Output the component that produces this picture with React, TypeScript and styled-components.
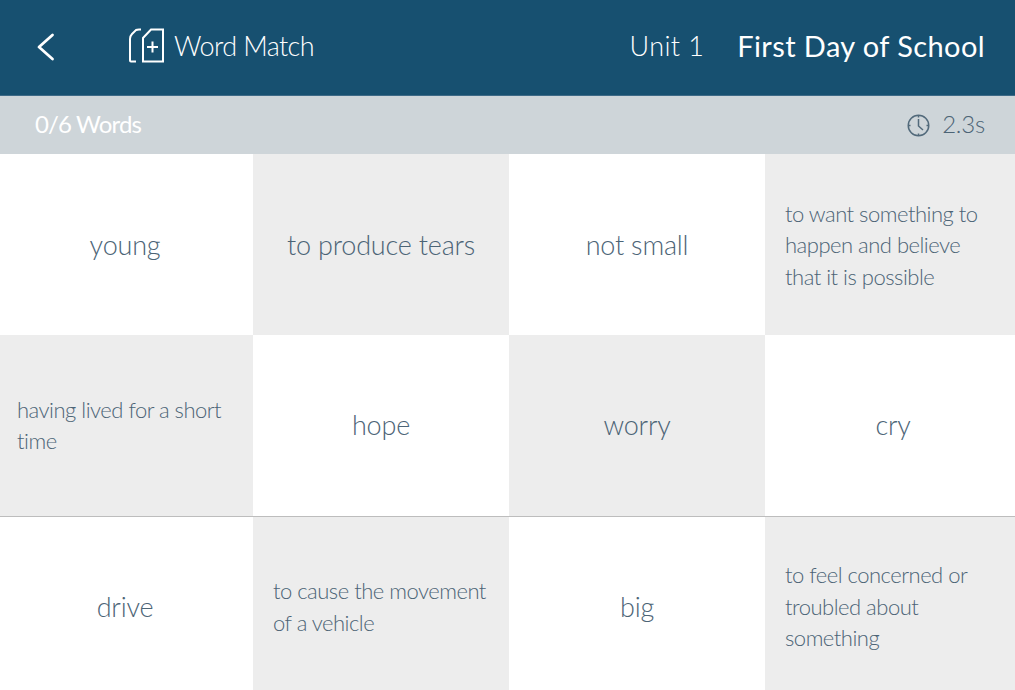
import styled, { createGlobalStyle } from "styled-components";

const GlobalStyle = createGlobalStyle`
  html, body {
    margin: 0;
    padding: 0;
    background: #fff;
  }
  body {
    font-family: "Lato", "Noto Sans", sans-serif;
    font-weight: 300;
    overflow: hidden;
  }
`;

const Page = styled.div`
  width: 1015px;
  height: 690px;
  overflow: hidden;
`;

const Header = styled.header`
  height: 91px;
  padding: 0 30px 4px 36px;
  border-bottom: 1px solid #3d6a87;
  background: #175070;
  color: #fff;
  display: flex;
  align-items: center;
`;

const BackButton = styled.div`
  width: 20px;
  height: 30px;
  margin-right: 72px;
`;

const ActivityIcon = styled.svg`
  width: 38px;
  height: 38px;
  margin-right: 8px;
`;

const ActivityName = styled.span`
  font-size: 27px;
  letter-spacing: -0.6px;
`;

const UnitLabel = styled.span`
  margin-left: auto;
  font-size: 27px;
  letter-spacing: 0.4px;
`;

const LessonTitle = styled.span`
  margin-left: 33px;
  font-size: 29px;
  font-weight: 400;
  letter-spacing: 0.4px;
`;

const StatusBar = styled.div`
  height: 58px;
  background: #ced5d9;
  display: flex;
  align-items: center;
  justify-content: space-between;
  padding: 0 30px 0 35px;
`;

const WordCount = styled.span`
  margin-bottom: 4px;
  color: #fff;
  font-size: 24px;
  font-weight: 400;
  letter-spacing: -0.85px;
`;

const Timer = styled.div`
  display: flex;
  align-items: center;
  gap: 12px;
  color: #4c6476;
  font-size: 24px;
`;

const TimerValue = styled.span`
  margin-bottom: 4px;
  letter-spacing: -0.2px;
`;

const Board = styled.div`
  margin-left: -3px;
  display: grid;
  grid-template-columns: repeat(4, 256px);
  grid-template-rows: 181px 182px 178px;
`;

const Card = styled.div<{ $shaded: boolean; $ruled?: boolean }>`
  background: ${(p) => (p.$shaded ? "#ededed" : "#fff")};
  border-bottom: ${(p) => (p.$ruled ? "1px solid #bdbdbd" : "none")};
  color: #4c6476;
  display: flex;
  align-items: center;
  padding: 0 20px ${(p) => (p.$ruled ? "2px" : "0")};
`;

const Term = styled.div`
  width: 100%;
  text-align: center;
  font-size: 27px;
  letter-spacing: -0.2px;
`;

const Definition = styled.div`
  margin-top: 1px;
  font-size: 22px;
  line-height: 31.5px;
  letter-spacing: -0.5px;
`;

type CardData = { text: string; long?: boolean };

const cards: CardData[] = [
  { text: "young" },
  { text: "to produce tears" },
  { text: "not small" },
  { text: "to want something to happen and believe that it is possible", long: true },
  { text: "having lived for a short time", long: true },
  { text: "hope" },
  { text: "worry" },
  { text: "cry" },
  { text: "drive" },
  { text: "to cause the movement of a vehicle", long: true },
  { text: "big" },
  { text: "to feel concerned or troubled about something", long: true },
];

const shaded = [1, 3, 4, 6, 9, 11];

export default function App() {
  return (
    <Page>
      <GlobalStyle />
      <Header>
        <BackButton>
          <svg width="20" height="30" viewBox="0 0 20 30" fill="none">
            <path d="M16.500 4 L3 16 L16.500 28" stroke="#fff" strokeWidth="2.800" strokeLinecap="round" strokeLinejoin="round" />
          </svg>
        </BackButton>
        <ActivityIcon viewBox="0 0 38 38" fill="none" stroke="#fff" strokeWidth="2">
          <path d="M8 34.500 H3 Q2 34.500 2 33.500 V12 Q2 9 4 7 L8 3 Q9 2.500 11 2.500 H13" />
          <path d="M15 34.500 V11 L23 2.500 H35 V34.500 Z" />
          <path d="M24.500 14.500 V25.500 M19 20 H30" />
        </ActivityIcon>
        <ActivityName>Word Match</ActivityName>
        <UnitLabel>Unit 1</UnitLabel>
        <LessonTitle>First Day of School</LessonTitle>
      </Header>
      <StatusBar>
        <WordCount>0/6 Words</WordCount>
        <Timer>
          <svg width="23" height="23" viewBox="0 0 23 23" fill="none" stroke="#526a7b" strokeWidth="1.500">
            <circle cx="11.500" cy="11.500" r="10.250" />
            <path d="M11.500 5 V12 L16 16 M11.500 1.500 V3.500 M11.500 19.500 V21.500 M1.500 11.500 H3.500 M19.500 11.500 H21.500" />
          </svg>
          <TimerValue>2.3s</TimerValue>
        </Timer>
      </StatusBar>
      <Board>
        {cards.map((card, i) => (
          <Card key={card.text} $shaded={shaded.includes(i)} $ruled={i >= 4 && i < 8}>
            {card.long ? <Definition>{card.text}</Definition> : <Term>{card.text}</Term>}
          </Card>
        ))}
      </Board>
    </Page>
  );
}
